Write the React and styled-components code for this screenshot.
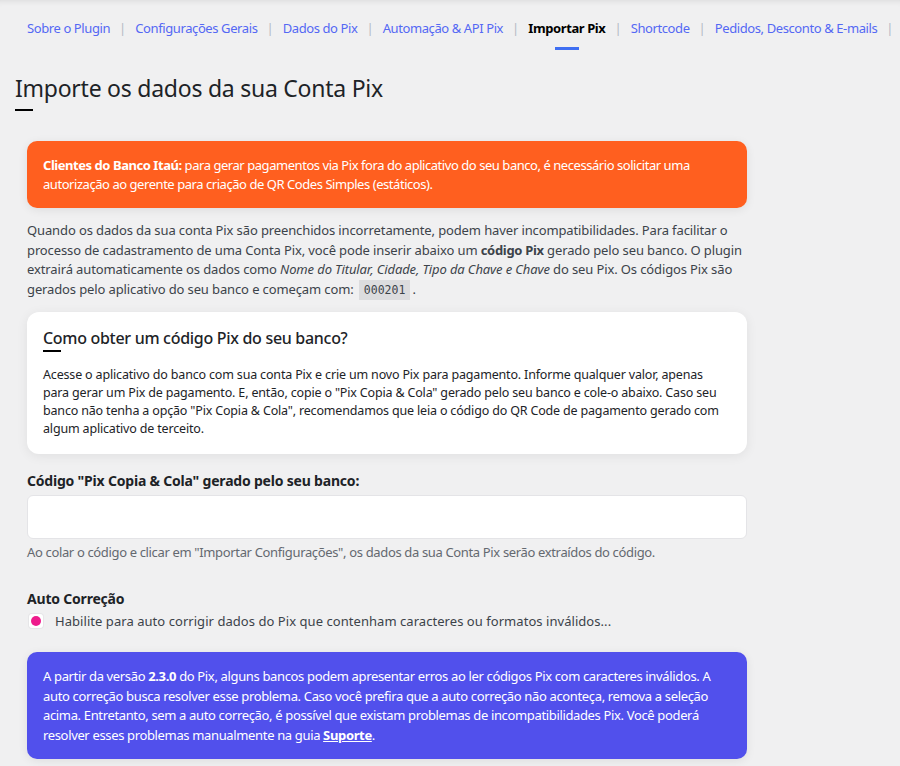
import React from "react";
import styled, { createGlobalStyle } from "styled-components";

const GlobalStyle = createGlobalStyle`
  body {
    margin: 0;
    background: #f0f0f1;
    font-family: "Noto Sans", "Open Sans", sans-serif;
    color: #3c434a;
    font-size: 13px;
  }
`;

const Page = styled.div`
  padding: 0 0 20px 0;
  overflow: hidden;
  min-height: 766px;
  box-sizing: border-box;
  box-shadow: inset 0 7px 7px -7px rgba(0, 0, 0, 0.12);
`;

const Nav = styled.nav`
  display: flex;
  align-items: center;
  padding: 19px 0 0 27px;
  white-space: nowrap;
  line-height: 18px;
`;

const Tab = styled.a`
  position: relative;
  font-size: 13px;
  line-height: 18px;
  letter-spacing: -0.4px;
  color: ${(p) => (p.$active ? "#000" : "#5468f4")};
  font-weight: ${(p) => (p.$active ? 700 : 400)};
  text-decoration: none;
  &::after {
    content: "";
    display: ${(p) => (p.$active ? "block" : "none")};
    position: absolute;
    left: 50%;
    transform: translateX(-50%);
    bottom: -13px;
    width: 24px;
    height: 3px;
    background: #3f6ff2;
  }
`;

const Sep = styled.span`
  color: #b4bac6;
  margin: 0 9px;
  font-size: 13px;
`;

const Title = styled.h1`
  margin: 36px 0 0 15px;
  font-size: 23px;
  font-weight: 400;
  line-height: 30px;
  letter-spacing: -0.25px;
  color: #1d2327;
  &::after {
    content: "";
    display: block;
    width: 18px;
    height: 2px;
    background: #000;
    margin-top: 6px;
  }
`;

const Content = styled.div`
  width: 720px;
  margin: 30px 0 0 27px;
`;

const Notice = styled.div`
  margin-top: ${(p) => p.$mt || "0"};
  background: ${(p) => p.$bg};
  color: #fff;
  border-radius: 10px;
  padding: 15px 16px 14px 16px;
  font-size: 13px;
  line-height: ${(p) => p.$lh || "19px"};
  box-shadow: 0 2px 10px rgba(0, 0, 0, 0.08);
  letter-spacing: ${(p) => p.$ls || "-0.45px"};
  b, strong {
    font-weight: 700;
  }
  a {
    color: #fff;
    font-weight: 700;
    text-decoration: underline;
  }
`;

const Para = styled.p`
  margin: 13px 0 0 0;
  font-size: 13px;
  line-height: 19.5px;
  color: #3c434a;
  letter-spacing: -0.12px;
  strong {
    letter-spacing: -0.3px;
  }
`;

const Code = styled.code`
  font-family: "DejaVu Sans Mono", "Liberation Mono", monospace;
  font-size: 11.5px;
  background: #dcdcde;
  padding: 3px 5px;
  margin: 0 2px;
  color: #3c434a;
  letter-spacing: 0;
`;

const Card = styled.div`
  margin-top: 12px;
  background: #fff;
  border-radius: 12px;
  padding: 15px 16px 16px 16px;
  box-shadow: 0 2px 12px rgba(0, 0, 0, 0.07);
`;

const CardTitle = styled.h3`
  margin: 0;
  font-size: 16px;
  font-weight: 500;
  line-height: 22px;
  letter-spacing: -0.3px;
  color: #1d2327;
  &::after {
    content: "";
    display: block;
    width: 18px;
    height: 2px;
    background: #000;
    margin-top: 1px;
  }
`;

const CardText = styled.p`
  margin: 14px 0 0 0;
  font-size: 12.5px;
  line-height: 18px;
  color: #1d2327;
  letter-spacing: -0.17px;
`;

const Label = styled.div`
  margin-top: ${(p) => p.$mt || "18px"};
  font-size: 14px;
  font-weight: 700;
  line-height: 18px;
  color: #1d2327;
  letter-spacing: -0.2px;
`;

const Input = styled.input`
  display: block;
  box-sizing: border-box;
  width: 100%;
  height: 44px;
  margin-top: 5px;
  border: 1px solid #e4e4e7;
  border-radius: 6px;
  background: #fff;
  outline: none;
`;

const Help = styled.div`
  margin-top: 4px;
  font-size: 13px;
  line-height: 18px;
  color: #646970;
  letter-spacing: -0.35px;
`;

const CheckRow = styled.label`
  display: flex;
  align-items: center;
  gap: 12px;
  margin-top: 4px;
  padding-left: 2px;
  font-size: 13px;
  line-height: 18px;
  color: #3c434a;
  letter-spacing: 0.05px;
`;

const Check = styled.span`
  flex: none;
  width: 14px;
  height: 14px;
  border-radius: 3px;
  background: #fff;
  display: flex;
  align-items: center;
  justify-content: center;
  box-shadow: 0 0 0 1px #e6e6e8;
  &::before {
    content: "";
    width: 10px;
    height: 10px;
    border-radius: 50%;
    background: #ee1b8c;
  }
`;

const tabs = [
  "Sobre o Plugin",
  "Configurações Gerais",
  "Dados do Pix",
  "Automação & API Pix",
  "Importar Pix",
  "Shortcode",
  "Pedidos, Desconto & E-mails",
];

export default function App() {
  return (
    <Page>
      <GlobalStyle />
      <Nav>
        {tabs.map((t) => (
          <React.Fragment key={t}>
            <Tab href="#" $active={t === "Importar Pix"}>
              {t}
            </Tab>
            <Sep>|</Sep>
          </React.Fragment>
        ))}
      </Nav>
      <Title>Importe os dados da sua Conta Pix</Title>
      <Content>
        <Notice $bg="#ff5f1f">
          <b>Clientes do Banco Itaú:</b> para gerar pagamentos via Pix fora do
          aplicativo do seu banco, é necessário solicitar uma autorização ao
          gerente para criação de QR Codes Simples (estáticos).
        </Notice>
        <Para>
          Quando os dados da sua conta Pix são preenchidos incorretamente,
          podem haver incompatibilidades. Para facilitar o processo de
          cadastramento de uma Conta Pix, você pode inserir abaixo um{" "}
          <strong>código Pix</strong> gerado pelo seu banco. O plugin extrairá
          automaticamente os dados como{" "}
          <em>Nome do Titular, Cidade, Tipo da Chave e Chave</em> do seu Pix.
          Os códigos Pix são gerados pelo aplicativo do seu banco e começam
          com: <Code>000201</Code>.
        </Para>
        <Card>
          <CardTitle>Como obter um código Pix do seu banco?</CardTitle>
          <CardText>
            Acesse o aplicativo do banco com sua conta Pix e crie um novo Pix
            para pagamento. Informe qualquer valor, apenas para gerar um Pix de
            pagamento. E, então, copie o "Pix Copia &amp; Cola" gerado pelo seu
            banco e cole-o abaixo. Caso seu banco não tenha a opção "Pix Copia
            &amp; Cola", recomendamos que leia o código do QR Code de pagamento
            gerado com algum aplicativo de terceito.
          </CardText>
        </Card>
        <Label>Código "Pix Copia &amp; Cola" gerado pelo seu banco:</Label>
        <Input type="text" />
        <Help>
          Ao colar o código e clicar em "Importar Configurações", os dados da
          sua Conta Pix serão extraídos do código.
        </Help>
        <Label $mt="29px">Auto Correção</Label>
        <CheckRow>
          <Check />
          Habilite para auto corrigir dados do Pix que contenham caracteres ou
          formatos inválidos...
        </CheckRow>
        <Notice $bg="#5150ec" $lh="19.5px" $ls="-0.35px" $mt="22px">
          A partir da versão <b>2.3.0</b> do Pix, alguns bancos podem
          apresentar erros ao ler códigos Pix com caracteres inválidos. A auto
          correção busca resolver esse problema. Caso você prefira que a auto
          correção não aconteça, remova a seleção acima. Entretanto, sem a auto
          correção, é possível que existam problemas de incompatibilidades Pix.
          Você poderá resolver esses problemas manualmente na guia{" "}
          <a href="#">Suporte</a>.
        </Notice>
      </Content>
    </Page>
  );
}
